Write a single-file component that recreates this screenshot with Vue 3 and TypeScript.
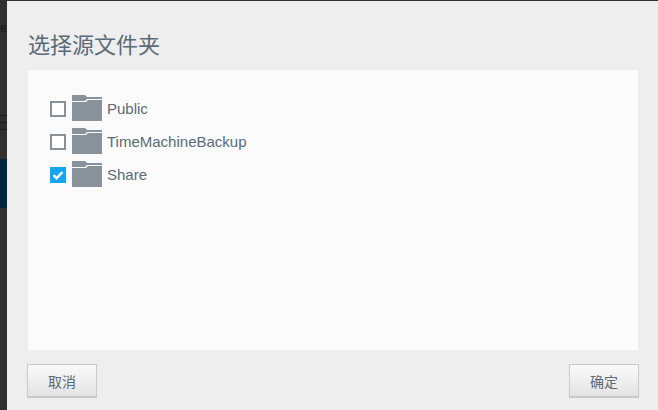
<template>
  <div class="page">
    <div class="backdrop">
      <span class="peek-letter">e</span>
      <div class="peek-lines">
        <i></i>
        <i></i>
        <i></i>
      </div>
      <div class="peek-nav"></div>
    </div>
    <div class="dialog">
      <h1 class="title">选择源文件夹</h1>
      <div class="panel">
        <div v-for="item in folders" :key="item.name" class="row">
          <span class="check" :class="{ on: item.checked }">
            <svg v-if="item.checked" viewBox="0 0 16 16" width="16" height="16">
              <path d="M3.5 8.2 6.6 11.2 12.5 5" fill="none" stroke="#fff" stroke-width="2.4" />
            </svg>
          </span>
          <svg class="folder" viewBox="0 0 30 26" width="30" height="26">
            <path fill="#87929b" d="M0 0H13L15 2H30V4H15L13 6H0Z" />
            <path fill="#87929b" d="M0 7H14L16 5H30V26H0Z" />
          </svg>
          <span class="name">{{ item.name }}</span>
        </div>
      </div>
      <div class="actions">
        <button class="btn">取消</button>
        <button class="btn">确定</button>
      </div>
    </div>
  </div>
</template>

<script setup lang="ts">
interface FolderItem {
  name: string
  checked: boolean
}

const folders: FolderItem[] = [
  { name: 'Public', checked: false },
  { name: 'TimeMachineBackup', checked: false },
  { name: 'Share', checked: true },
]
</script>

<style>
html,
body {
  margin: 0;
  background: #2f2f2f;
}
</style>

<style scoped>
.page {
  display: flex;
  width: 658px;
  height: 410px;
  overflow: hidden;
  background: #2f2f2f;
  font-family: "Liberation Sans", "Noto Sans CJK SC", sans-serif;
}

.backdrop {
  position: relative;
  width: 7px;
  flex: none;
}

.peek-letter {
  position: absolute;
  top: 21px;
  left: 0;
  font-size: 12px;
  color: #1c1c1c;
}

.peek-lines {
  position: absolute;
  top: 115px;
  left: 0;
  width: 7px;
}

.peek-lines i {
  display: block;
  height: 1px;
  margin-bottom: 6px;
  background: #1d1d1d;
}

.peek-nav {
  position: absolute;
  top: 159px;
  left: 0;
  width: 7px;
  height: 49px;
  background: #04263c;
}

.dialog {
  flex: 1;
  margin-top: 1px;
  padding: 0 19px 0 21px;
  background: #eeeeee;
  display: flex;
  flex-direction: column;
}

.title {
  margin: 30px 0 0;
  height: 39px;
  font-size: 22px;
  line-height: 30px;
  font-weight: 400;
  color: #5a6a77;
}

.panel {
  height: 255px;
  padding: 25px 22px 0;
  background: #fbfbfb;
  margin-right: 1px;
}

.row {
  display: flex;
  align-items: flex-start;
  height: 33px;
}

.check {
  width: 16px;
  height: 16px;
  margin-top: 6px;
  box-sizing: border-box;
  border: 2px solid #87929b;
  background: #fff;
}

.check.on {
  border: 0;
  background: #15a5f5;
}

.check svg {
  display: block;
}

.folder {
  margin-left: 6px;
  margin-right: 5px;
  display: block;
}

.name {
  margin-top: 4px;
  font-size: 15px;
  line-height: 20px;
  color: #5a6a77;
}

.actions {
  display: flex;
  justify-content: space-between;
  margin: 14px 0 0 -1px;
}

.btn {
  width: 70px;
  height: 34px;
  padding: 0;
  box-sizing: border-box;
  border: 1px solid #c9c9c9;
  border-bottom-width: 2px;
  background: linear-gradient(#fafafa, #e3e3e3);
  font-family: inherit;
  font-size: 14px;
  color: #5a6a77;
}
</style>
